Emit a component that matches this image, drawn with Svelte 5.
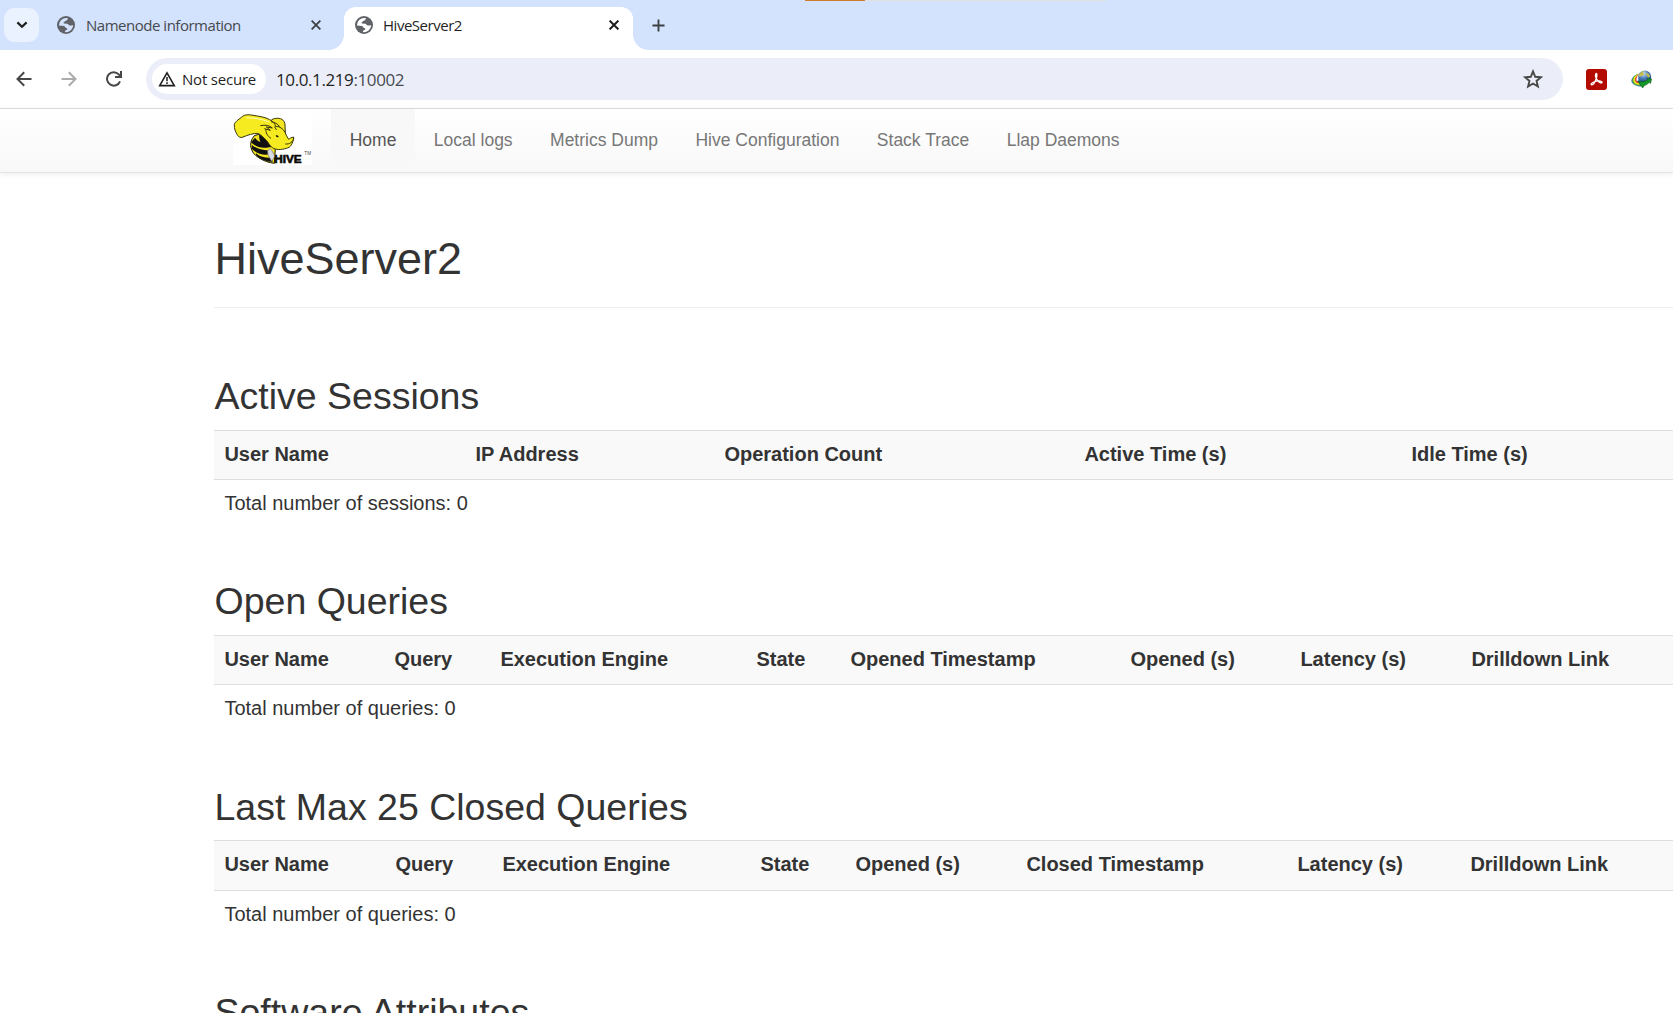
<script>
  const links = ['Home', 'Local logs', 'Metrics Dump', 'Hive Configuration', 'Stack Trace', 'Llap Daemons'];
  const sections = [
    {
      title: 'Active Sessions', kind: 'sessions',
      heads: ['User Name', 'IP Address', 'Operation Count', 'Active Time (s)', 'Idle Time (s)'],
      total: 'Total number of sessions: 0'
    },
    {
      title: 'Open Queries', kind: 'open',
      heads: ['User Name', 'Query', 'Execution Engine', 'State', 'Opened Timestamp', 'Opened (s)', 'Latency (s)', 'Drilldown Link'],
      total: 'Total number of queries: 0'
    },
    {
      title: 'Last Max 25 Closed Queries', kind: 'closed',
      heads: ['User Name', 'Query', 'Execution Engine', 'State', 'Opened (s)', 'Closed Timestamp', 'Latency (s)', 'Drilldown Link'],
      total: 'Total number of queries: 0'
    }
  ];
</script>

{#snippet globe()}
  <svg class="globe" viewBox="0 0 18 18">
    <circle cx="9" cy="9" r="9" fill="#5f6368" />
    <path fill="#d3e2fd" class="land" d="M10.6 2.1C11 3.6 10.3 4.6 8.9 4.7 7.600 4.800 7.900 6 6.900 6.300 6.200 6.500 6.300 7.400 7.200 7.500L10.200 7.700C11.500 7.900 11.600 9.500 12.900 9.600 14.200 9.700 14.800 9.100 16.200 9.300A7.200 7.200 0 0 1 8 16.100C7.600 14.900 8.400 14.200 9.600 13.900 10.700 13.600 10.300 12 9.200 11.900 8 11.800 8.300 10.200 7 9.900L1.900 9.500A7.200 7.200 0 0 1 10.600 2.100Z" />
  </svg>
{/snippet}

<div class="window">
  <div class="strip">
    <div class="progress"><i></i></div>
    <button class="search" aria-label="Search tabs">
      <svg width="12" height="8" viewBox="0 0 12 8"><path d="M1.400 1.400 6 5.800l4.600-4.400" fill="none" stroke="#1f1f1f" stroke-width="2.200" /></svg>
    </button>
    <div class="tab idle">
      {@render globe()}
      <span class="name">Namenode information</span>
      <svg class="close" viewBox="0 0 10 10"><path d="M.6.6 9.400 9.400M9.400.6.600 9.400" stroke="#3c4043" stroke-width="1.800" /></svg>
    </div>
    <div class="tab current">
      {@render globe()}
      <span class="name">HiveServer2</span>
      <svg class="close" viewBox="0 0 10 10"><path d="M.6.6 9.400 9.400M9.400.6.600 9.400" stroke="#1f1f1f" stroke-width="2" /></svg>
    </div>
    <svg class="plus" viewBox="0 0 14 14"><path d="M7 .5v13M.5 7h13" stroke="#3c4043" stroke-width="2" /></svg>
  </div>

  <div class="toolbar">
    <svg class="back" viewBox="0 0 16 16"><path d="M15.500 8H2M8.200 1.200 1.500 8l6.700 6.800" fill="none" stroke="#474747" stroke-width="2" /></svg>
    <svg class="forward" viewBox="0 0 16 16"><path d="M.5 8H14M7.800 1.200 14.500 8l-6.700 6.800" fill="none" stroke="#ababab" stroke-width="2" /></svg>
    <svg class="reload" viewBox="0 0 16 16"><path d="M14 10.300A6.700 6.700 0 1 1 12.700 3.400L15 5.800M15 0V6H9" fill="none" stroke="#474747" stroke-width="2" /></svg>
    <div class="address">
      <div class="chip">
        <svg width="18" height="16" viewBox="0 0 18 16"><path d="M9 1.900 16.300 14.600H1.700Z" fill="none" stroke="#1f1f1f" stroke-width="1.600" /><path d="M9 6v4.200M9 11.200v1.700" stroke="#1f1f1f" stroke-width="1.500" /></svg>
        <span>Not secure</span>
      </div>
      <span class="url">10.0.1.219<em>:10002</em></span>
      <svg class="star" viewBox="0 0 20 20"><path d="M10 2.400l2.200 5.400 5.700.45-4.350 3.700 1.350 5.550L10 14.500l-4.900 3 1.350-5.550L2.100 8.250l5.700-.45Z" fill="none" stroke="#474747" stroke-width="1.900" /></svg>
    </div>
    <svg class="pdf" viewBox="0 0 21 21">
      <rect width="21" height="21" rx="3" fill="#b30b00" />
      <path d="M9.900 4.500c1.200-.4 1.300 2 .4 4.700-.9 2.800-3 6.500-4.500 6.600-1.400 0-.7-1.800 2-2.800 2.400-.9 6.400-1.400 7.900-.3 1.200 1-.4 1.800-2.200.7C11.200 12.100 8.400 6.700 9.900 4.500Z" fill="none" stroke="#fff" stroke-width="1.300" />
    </svg>
    <svg class="idm" viewBox="0 0 21 19">
      <defs>
        <radialGradient id="ball" cx=".4" cy=".25" r=".75"><stop offset="0" stop-color="#d9e8f5" /><stop offset=".45" stop-color="#5384bd" /><stop offset="1" stop-color="#133a73" /></radialGradient>
      </defs>
      <path d="M7 4C2 6 0 9 .5 11.500 1.500 15 6 16.500 10 16.500L9 10Z" fill="#2775bd" />
      <path d="M7.500 4.500C3.500 6.200 1.600 8.500 2 11c.8 2.800 4 4 7.500 4" fill="none" stroke="#63b52d" stroke-width="1.500" />
      <path d="M7.500 5C4.500 6.500 3 8.500 3.400 10.700c.6 2 2.800 3 5.600 3.200" fill="none" stroke="#f3e51f" stroke-width="1.800" />
      <path d="M8 5.500C5.500 7 4.500 8.600 4.900 10.600c.4 1.200 1.500 1.800 3 2" fill="none" stroke="#e8402a" stroke-width="1.600" />
      <path d="M8.300 5.800C6.500 7.300 6 8.800 6.500 10.700" fill="none" stroke="#fff" stroke-width="1.800" />
      <circle cx="13.700" cy="6.900" r="6.500" fill="url(#ball)" />
      <path d="M8.200 4.500c1-2 3-3.300 5-3.500L12 3l1.500 1-2 1.500-3.300 1.500Zm7-1.500 2.500.8 1.500 2.700-1.700 1-2-2Z" fill="#c3bd50" />
      <path d="M7 11.500c4 .8 7.500 0 10-2l-.5-1 4 .4-1 4.600-1.300-1.200c-1.500 1.700-3.200 2.700-5 3.500L11.500 18l-1-2C8 15.500 9.500 13.500 7 11.500Z" fill="#159728" stroke="#075914" stroke-width=".6" />
    </svg>
  </div>

  <nav>
    <div class="brand">
      <svg width="79" height="51" viewBox="24 27 237 153">
        <rect x="24" y="27" width="237" height="153" fill="#fff" />
        <path d="M134 66C131 50 140 40 155 40c17-2 27 10 25 26l2 29-20 8Z" fill="#f3e521" stroke="#393508" stroke-width="3" />
        <path d="M88 92C70 112 74 142 101 158c17 11 32 15 47 17l3-44-13-37-27-9Z" fill="#f3e521" stroke="#171503" stroke-width="3" />
        <path d="M78 112c16 17 40 20 58 12l2-9c-19 3-40-4-48-17Zm2 19c16 16 40 22 57 15l1-10c-22 2-46-5-57-16Zm13 19c14 14 31 20 50 21l-3-14c-18 3-35-1-47-12Z" fill="#111" />
        <path d="M103 84c-3 20 4 36 18 44l18-2 6-20-22-24Z" fill="#111" />
        <path d="M28 58C31 49 40 44 48 38 57 28 70 28 84 31c20 3 36 5 50 13 10 5 17 12 18 21 11-2 22 6 28 17 3 8 6 13 11 21 4-4 8-5 15-7-2 20-9 32-22 34-16 5-31 5-42-2-9-6-11-15-18-22-8-9-15-15-25-21-16 0-30 5-45 11-8 4-16-2-18-8C32 80 27 72 28 58Z" fill="#f6eb20" stroke="#39360d" stroke-width="3" />
        <path d="M106 62c15-3 28-1 36 7l-18-3 12 10-18-5m20-21c12 3 22 6 26 17m-16-2 7 10M123 72c-2 11 5 22 15 28m43 17c14 1 22-6 26-17" fill="none" stroke="#393508" stroke-width="3" />
        <path d="M64 38c26 1 47 4 67 13" fill="none" stroke="#fffbc0" stroke-width="3" />
        <path d="M152 91c5-1 8 1 9 5-4 2-8 1-9-5Z" fill="#151405" />
        <path d="M128 138c5-9 11-7 13 0l9 15-10 16-11-19Z" fill="#d9dce0" stroke="#777" stroke-width="2" />
        <text class="wordmark" x="148" y="175" textLength="82" lengthAdjust="spacingAndGlyphs">HIVE</text>
        <text class="tm" x="238" y="151">TM</text>
      </svg>
    </div>
    {#each links as link, i}<a href="#top" class:active={i === 0}>{link}</a>{/each}
  </nav>

  <main>
    <h1>HiveServer2</h1>
    {#each sections as s}
      <section class={s.kind}>
        <h2>{s.title}</h2>
        <div class="row head">{#each s.heads as h}<b>{h}</b>{/each}</div>
        <div class="row total">{s.total}</div>
      </section>
    {/each}
    <section class="software"><h2>Software Attributes</h2></section>
  </main>
</div>

<style>
  :global(body) { margin: 0; background: #fff; overflow: hidden; }
  svg { display: block; flex: none; }
  .window { width: 1673px; height: 1013px; overflow: hidden; background: #fff; font-family: 'Liberation Sans', Arial, sans-serif; color: #333; }

  .strip { position: relative; height: 50px; box-sizing: border-box; padding: 7px 0 0 4px; display: flex; background: #d3e2fd; font-family: 'Open Sans', 'Noto Sans', sans-serif; }
  .progress { position: absolute; left: 805px; top: 0; width: 301px; height: 1px; background: #e0e1e3; }
  .progress i { display: block; width: 60px; height: 1px; background: #cf7d2b; }
  .search { width: 35px; height: 34px; margin-top: 1px; padding: 0; border: 0; border-radius: 11px; background: #ebf2ff; display: flex; align-items: center; justify-content: center; }
  .tab { display: flex; align-items: center; height: 43px; box-sizing: border-box; padding-bottom: 8px; font-size: 15px; }
  .idle { width: 305px; padding-left: 18px; color: #46494d; }
  .current { position: relative; width: 289px; padding-left: 11px; background: #fff; border-radius: 12px 12px 0 0; color: #1f1f1f; }
  .current::before, .current::after { content: ''; position: absolute; bottom: 0; width: 15px; height: 15px; }
  .current::before { left: -15px; background: radial-gradient(circle at 0 0, transparent 14.5px, #fff 15px); }
  .current::after { right: -15px; background: radial-gradient(circle at 100% 0, transparent 14.5px, #fff 15px); }
  .globe { width: 18px; height: 18px; }
  .current .land { fill: #fff; }
  .name { margin-left: 11px; white-space: nowrap; letter-spacing: -0.48px; }
  .current .name { margin-left: 10px; }
  .close { width: 10px; height: 10px; margin-left: auto; }
  .idle .close { margin-right: 23px; }
  .current .close { margin-right: 14px; }
  .plus { width: 13px; height: 13px; margin: 12px 0 0 19px; }

  .toolbar { height: 58px; display: flex; align-items: center; background: #fff; border-bottom: 1px solid #dedfe1; font-family: 'Open Sans', 'Noto Sans', sans-serif; box-sizing: content-box; }
  .back, .forward, .reload { width: 16px; height: 16px; }
  .back { margin-left: 16px; }
  .forward { margin-left: 29px; }
  .reload { margin-left: 29px; }
  .address { width: 1417px; height: 42px; margin-left: 24px; box-sizing: border-box; padding: 0 20px 0 6px; border-radius: 21px; background: #ebeef8; display: flex; align-items: center; flex: none; }
  .chip { width: 114px; height: 30px; box-sizing: border-box; padding: 0 0 1px 6px; border-radius: 15px; background: #fff; display: flex; align-items: center; gap: 6px; flex: none; color: #1f1f1f; font-size: 15px; letter-spacing: -0.2px; white-space: nowrap; }
  .url { margin-left: 10px; font-size: 17px; letter-spacing: -0.4px; color: #1f1f1f; }
  .url em { font-style: normal; color: #474b52; }
  .star { width: 20px; height: 20px; margin-left: auto; }
  .pdf { width: 21px; height: 21px; margin-left: 23px; }
  .idm { width: 21px; height: 19px; margin-left: 24px; }

  nav { height: 63px; padding-left: 233px; display: flex; align-items: flex-start; background: linear-gradient(#fff, #f8f8f8); border-bottom: 1px solid #e4e4e4; box-shadow: 0 1px 6px rgba(0, 0, 0, .08); }
  .brand { width: 98px; padding-top: 5px; box-sizing: border-box; flex: none; }
  .wordmark { font: 900 34px 'Liberation Sans', Arial, sans-serif; fill: #0b0a02; stroke: #0b0a02; stroke-width: 2px; }
  .tm { font: 14px 'Liberation Sans', Arial, sans-serif; fill: #444; }
  nav a { height: 56px; padding: 0 18.750px 0 18.700px; box-sizing: border-box; font-size: 17.500px; line-height: 62px; color: #777; text-decoration: none; white-space: nowrap; }
  nav a.active { color: #555; background: #f8f8f8; }

  main { padding-left: 214px; }
  h1, h2 { margin: 0; padding-left: 0.5px; font-weight: 400; white-space: nowrap; }
  h1 { height: 135px; box-sizing: border-box; padding-top: 61px; border-bottom: 1px solid #eee; font-size: 45px; line-height: 50px; }
  section { height: 205px; }
  h2 { height: 63px; box-sizing: border-box; padding-top: 8px; font-size: 37.500px; line-height: 42px; }
  .closed h2, .software h2 { padding-top: 9px; }
  h1 + section { margin-top: 59px; }
  .row { height: 49px; box-sizing: border-box; border-top: 1px solid #ddd; padding-left: 10.400px; font-size: 20px; line-height: 47px; white-space: nowrap; }
  .head { display: grid; background: #f9f9f9; }
  .sessions .head { grid-template-columns: 251px 249px 360px 327px 272px; }
  .open .head { grid-template-columns: 170px 106px 256px 94px 280px 170px 171px 212px; }
  .closed .head { height: 50px; grid-template-columns: 171px 107px 258px 95px 171px 271px 173px 213px; }
</style>
